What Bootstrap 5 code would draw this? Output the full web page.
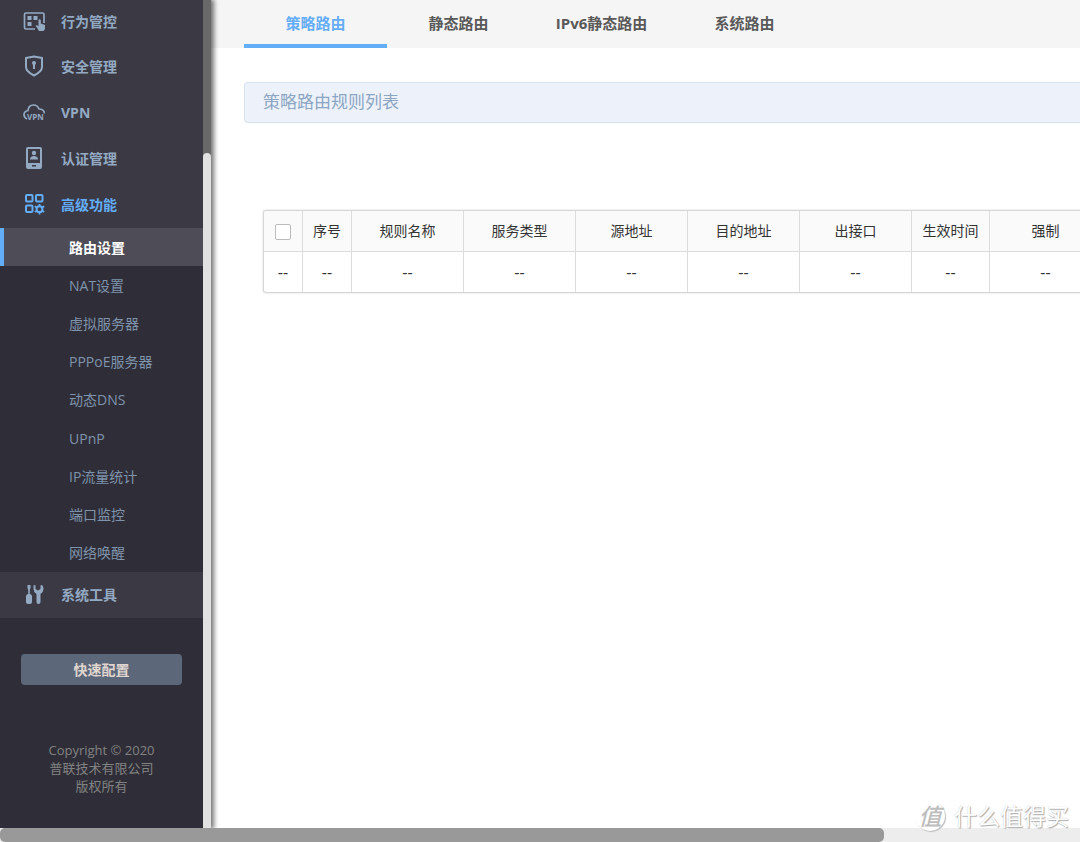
<!DOCTYPE html>
<html lang="zh-CN">
<head>
<meta charset="utf-8">
<meta name="viewport" content="width=device-width, initial-scale=1">
<title>策略路由</title>
<link rel="stylesheet" href="https://cdn.jsdelivr.net/npm/bootstrap@5.3.0/dist/css/bootstrap.min.css">
<style>
body{font-family:"Open Sans","Noto Sans CJK SC",sans-serif;font-size:14px;color:#333}
a{text-decoration:none}
.side{width:203px;background:#2f2e38;z-index:2}
.menu-main{background:#3a3944;color:#94aac3;height:46px;gap:16px;padding:0 0 2px 23px;font-weight:700}
.menu-main svg{width:22px;height:22px;flex:none}
.menu-first{height:44px}
.menu-main.current{color:#64adf8}
.submenu{height:344px}
.submenu a{color:#7f93ab;padding-left:65px;border-left:4px solid transparent}
.submenu a.current{color:#fff;font-weight:700;background:#4d4c57;border-left-color:#64adf8}
.quick{margin:36px 21px 0;height:31px;background:#5c687a;color:#e0d6d0;border-radius:4px;font-size:14px;font-weight:700}
.legal{margin-top:56px;font-size:13px;line-height:18px;color:#828282}
.vbar{width:8px;background:#696969;box-shadow:2px 0 5px 1px rgba(0,0,0,.55);z-index:1}
.vthumb{margin-top:153px;background:#e1e1e1;border-radius:4px 4px 0 0}
.hbar{height:14px;background:#ededed}
.hthumb{width:81.85%;background:#999;border-radius:5px}
.tabs{height:48px;background:#f5f5f5;padding-left:33px}
.tabs a{width:143px;color:#595959;font-size:15px;font-weight:700;border-bottom:4px solid transparent;padding-top:3px}
.tabs a.current{color:#64adf8;border-bottom-color:#64adf8}
.panel-title{margin:34px 0 0 33px;height:41px;padding-left:18px;font-size:17px;color:#8ba5c3;background:#edf2fa;border:1px solid #d5e2ef;border-right:0;border-radius:4px 0 0 4px}
.grid-wrap{margin:87px 0 0 52px;border:1px solid #d6d6d6;border-right:0;border-radius:3px 0 0 3px;box-shadow:0 0 2px rgba(0,0,0,.2)}
.rules{table-layout:fixed;width:838px;border-collapse:separate;border-spacing:0;text-align:center}
.rules th,.rules td{padding:0;font-weight:400;border-right:1px solid #dcdcdc;vertical-align:middle}
.rules th{height:41px;padding-bottom:2px;background:#fafafa;border-bottom:1px solid #dcdcdc}
.rules td{height:40px;font-size:16px}
.w-check{width:39px}.w-no{width:49px}.w-time{width:78px}
.rules .form-check-input{width:16px;height:16px;margin:0;border-radius:2px;border-color:#bbb;vertical-align:middle}
.watermark{right:11px;bottom:11px;gap:9px;font-size:23px;line-height:30px;color:#fff;text-shadow:1px 1px 1px #aaa,0 0 1px #bbb;z-index:3}
.seal{width:30px;height:30px;border-radius:50%;background:#fff;color:#bdbdbd;box-shadow:1px 1px 1px #bbb;text-shadow:none;font-weight:500;font-style:italic}
</style>
<script src="https://cdn.jsdelivr.net/npm/bootstrap@5.3.0/dist/js/bootstrap.bundle.min.js"></script>
</head>
<body class="vh-100 d-flex flex-column overflow-hidden position-relative">
<div class="d-flex flex-fill overflow-hidden">
  <aside class="side flex-shrink-0 d-flex flex-column">
    <nav class="d-flex flex-column">
      <a href="#" class="menu-main menu-first d-flex align-items-center">
        <svg viewBox="0 0 22 22" fill="none" stroke="currentColor" stroke-width="1.700"><path d="M12 19H3q-1.500 0-1.500-1.500v-13Q1.500 3 3 3h16.500Q21 3 21 4.500V13"/><path fill="currentColor" stroke="none" d="M4.500 6h4v4h-4zM10.500 6h4v4h-4zM4.500 12h4v4h-4zM15.500 10q1.200-1.500 2.300 0v3.500l4.200 1.500v4l-1.500 2H16l-3.500-5.500q1.500-1 3 .8z"/></svg>
        行为管控</a>
      <a href="#" class="menu-main d-flex align-items-center">
        <svg viewBox="0 0 22 22" fill="none" stroke="currentColor" stroke-width="2"><path d="M11 1.500Q7 2.300 3 3v9q0 4.500 8 8.500 8-4 8-8.500V3q-4-.7-8-1.500z"/><circle cx="11" cy="8" r="2" fill="currentColor" stroke="none"/><path d="M11 8v6"/></svg>
        安全管理</a>
      <a href="#" class="menu-main d-flex align-items-center">
        <svg viewBox="0 0 22 22" fill="none" stroke="currentColor" stroke-width="1.700"><path d="M4 18Q1 16.500 1 13.500t4-4Q5.500 4 10.500 4q4 0 5.500 4 5 0 5.500 4.500"/><text x="4" y="19" font-size="8" font-weight="700" fill="currentColor" stroke="none">VPN</text></svg>
        VPN</a>
      <a href="#" class="menu-main d-flex align-items-center">
        <svg viewBox="0 0 22 22"><path fill="currentColor" fill-rule="evenodd" d="M5 0h12q2 0 2 2v18q0 2-2 2H5q-2 0-2-2V2q0-2 2-2zM5 2v14h12V2zM9 18v1.500h4V18z"/><circle cx="11" cy="6" r="2.200" fill="currentColor"/><path fill="currentColor" d="M7 12.500q0-3.500 4-3.500t4 3.500z"/></svg>
        认证管理</a>
      <a href="#" class="menu-main current d-flex align-items-center">
        <svg viewBox="0 0 22 22" fill="none" stroke="currentColor" stroke-width="2"><rect x="3" y="2" width="6.500" height="6.500" rx="1"/><rect x="13" y="2" width="6.500" height="6.500" rx="1"/><rect x="3" y="12.500" width="6.500" height="6.500" rx="1"/><path stroke-width="1.800" d="M16.500 13v-2M16.500 19v2.500M13.800 14.500l-2-1.200M19.200 14.500l2-1.200M13.800 17.800l-2 1.200M19.200 17.800l2 1.200"/><circle cx="16.500" cy="16.200" r="2.900"/></svg>
        高级功能</a>
      <div class="submenu d-flex flex-column">
        <a href="#" class="current flex-fill d-flex align-items-center">路由设置</a>
        <a href="#" class="flex-fill d-flex align-items-center">NAT设置</a>
        <a href="#" class="flex-fill d-flex align-items-center">虚拟服务器</a>
        <a href="#" class="flex-fill d-flex align-items-center">PPPoE服务器</a>
        <a href="#" class="flex-fill d-flex align-items-center">动态DNS</a>
        <a href="#" class="flex-fill d-flex align-items-center">UPnP</a>
        <a href="#" class="flex-fill d-flex align-items-center">IP流量统计</a>
        <a href="#" class="flex-fill d-flex align-items-center">端口监控</a>
        <a href="#" class="flex-fill d-flex align-items-center">网络唤醒</a>
      </div>
      <a href="#" class="menu-main d-flex align-items-center">
        <svg viewBox="0 0 22 22" fill="currentColor"><path d="M4.500 2h3v3l-.7 2v4q2.200.5 2.200 2V19q0 2-2 2H5q-2 0-2-2v-6q0-1.500 2.200-2V7l-.7-2z"/><path d="M10.500 2.500q2-.8 2 0V6l2.500 1.500L17.500 6V2.500q0-.8 2 0Q20.500 4 20.500 6q0 3-3 5v8q0 2-2 2t-2-2v-8q-3-2-3-5z"/></svg>
        系统工具</a>
    </nav>
    <button type="button" class="quick btn border-0 p-0">快速配置</button>
    <footer class="legal text-center">Copyright © 2020<br>普联技术有限公司<br>版权所有</footer>
  </aside>
  <div class="vbar flex-shrink-0 d-flex flex-column"><div class="vthumb flex-fill"></div></div>
  <main class="flex-fill overflow-hidden">
    <nav class="tabs d-flex">
      <a href="#" class="current d-flex align-items-center justify-content-center">策略路由</a>
      <a href="#" class="d-flex align-items-center justify-content-center">静态路由</a>
      <a href="#" class="d-flex align-items-center justify-content-center">IPv6静态路由</a>
      <a href="#" class="d-flex align-items-center justify-content-center">系统路由</a>
    </nav>
    <h1 class="panel-title d-flex align-items-center fw-normal">策略路由规则列表</h1>
    <div class="grid-wrap overflow-hidden">
      <table class="rules">
        <colgroup><col class="w-check"><col class="w-no"><col><col><col><col><col><col class="w-time"><col></colgroup>
        <thead><tr><th><input type="checkbox" class="form-check-input" aria-label="全选"></th><th>序号</th><th>规则名称</th><th>服务类型</th><th>源地址</th><th>目的地址</th><th>出接口</th><th>生效时间</th><th>强制</th></tr></thead>
        <tbody><tr><td>--</td><td>--</td><td>--</td><td>--</td><td>--</td><td>--</td><td>--</td><td>--</td><td>--</td></tr></tbody>
      </table>
    </div>
  </main>
</div>
<div class="hbar flex-shrink-0 d-flex"><div class="hthumb"></div></div>
<div class="watermark position-absolute d-flex align-items-center"><span class="seal d-flex align-items-center justify-content-center">值</span><span>什么值得买</span></div>
</body>
</html>
